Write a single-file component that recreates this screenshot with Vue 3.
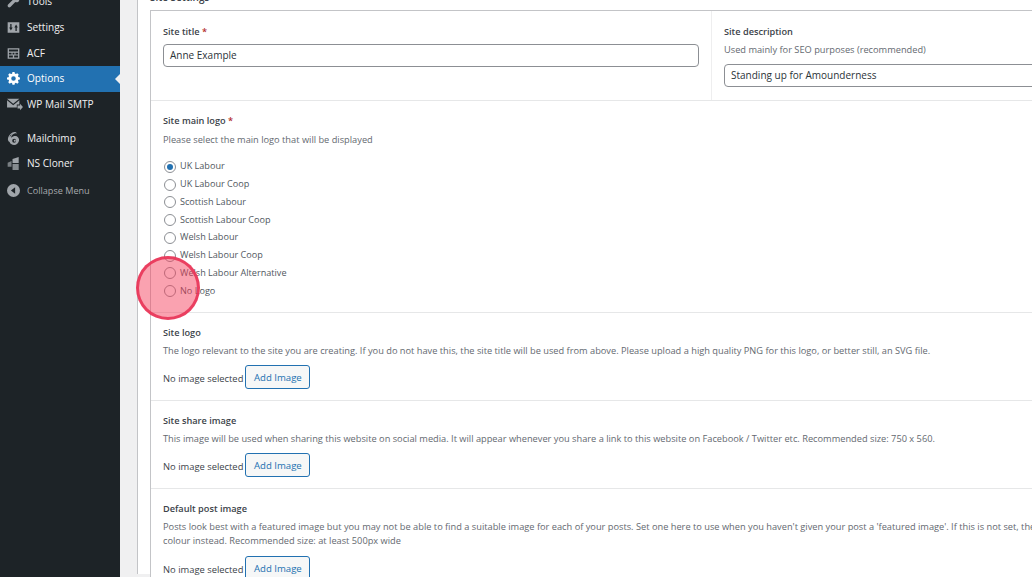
<script setup>
const logos = ['UK Labour', 'UK Labour Coop', 'Scottish Labour', 'Scottish Labour Coop', 'Welsh Labour', 'Welsh Labour Coop', 'Welsh Labour Alternative', 'No Logo']
const images = [
  { title: 'Site logo', desc: ['The logo relevant to the site you are creating. If you do not have this, the site title will be used from above. Please upload a high quality PNG for this logo, or better still, an SVG file.'] },
  { title: 'Site share image', desc: ['This image will be used when sharing this website on social media. It will appear whenever you share a link to this website on Facebook / Twitter etc. Recommended size: 750 x 560.'] },
  { title: 'Default post image', desc: ["Posts look best with a featured image but you may not be able to find a suitable image for each of your posts. Set one here to use when you haven't given your post a 'featured image'. If this is not set, the site will use a block of", 'colour instead. Recommended size: at least 500px wide'] }
]
</script>

<template>
  <div class="page">
    <aside class="side">
      <ul class="menu">
        <li class="item">
          <svg class="ic" viewBox="0 0 20 20"><path d="M18.500 3.600l-3.300 3.300-2.200-.6-.6-2.200 3.300-3.300C13.500.1 11 .8 9.700 2.500 8.700 3.900 8.600 5.700 9.200 7.200L1.700 14.700c-1 1-1 2.600 0 3.600s2.600 1 3.600 0l7.500-7.500c1.500.6 3.300.5 4.700-.5 1.700-1.300 2-4.300 1-6.700z"/></svg>
          <span>Tools</span>
        </li>
        <li class="item">
          <svg class="ic" viewBox="0 0 20 20"><path fill-rule="evenodd" d="M1 2h18v16H1zM5 4.500v5.500H3.300L6 14.500 8.700 10H7V4.500zM13 15.500V10h-1.700L14 5.500l2.700 4.500H15v5.500z"/></svg>
          <span>Settings</span>
        </li>
        <li class="item">
          <svg class="ic" viewBox="0 0 20 20"><path fill-rule="evenodd" d="M1 2h18v16H1zM3 4v3h14V4zM3 9v2.500h4V9zM8.500 9v2.500h3V9zM13 9v2.500h4V9zM3 13v3h6v-3zM11 13v3h6v-3z"/></svg>
          <span>ACF</span>
        </li>
        <li class="item active">
          <svg class="ic" viewBox="0 0 20 20"><path fill-rule="evenodd" d="M8.400 0h3.200l.5 2.400 1.600.7 2.100-1.300 2.300 2.300-1.300 2.100.7 1.600 2.400.5v3.200l-2.400.5-.7 1.600 1.300 2.100-2.300 2.300-2.100-1.300-1.600.7-.5 2.400H8.400l-.5-2.400-1.600-.7-2.100 1.300-2.300-2.300 1.300-2.100-.7-1.600L0 11.600V8.400l2.400-.5.7-1.600-1.300-2.100 2.300-2.300 2.100 1.300 1.600-.7zM10 6.500a3.500 3.500 0 1 0 0 7 3.500 3.500 0 0 0 0-7z"/></svg>
          <span>Options</span>
        </li>
        <li class="item">
          <svg class="ic wide" viewBox="0 0 22 18"><path d="M0 1h17L8.500 8zM0 3l8.500 7L17 3v6h-3.500v4H0z"/><path d="M14.500 10.500h3.500V8l4 4.500-4 4.500v-2.500h-3.500z"/></svg>
          <span>WP Mail SMTP</span>
        </li>
        <li class="item gap">
          <svg class="ic" viewBox="0 0 20 20"><path fill-rule="evenodd" d="M11.500 0c2 0 3.500 1 4 2.500-2-.8-3.800-.5-5.500.5C7.500 4.500 6 7 6.500 9c2.500-2.500 6-3.500 9-2 2 1 3.500 3.500 3 6.500-.5 3.500-4 6.500-7.500 6.500-3.500 0-6.500-2-7-4.500C2 14.500 1 12 1.500 10 2.500 5 7.500 0 11.500 0zM11 10.500a3 3 0 1 0 0 6 3 3 0 0 0 0-6zM9.500 1.800L5 5l-1 3 3-4zM12 12a1.500 1.500 0 1 1 0 3 1.500 1.500 0 0 1 0-3z"/></svg>
          <span>Mailchimp</span>
        </li>
        <li class="item">
          <svg class="ic" viewBox="0 0 20 20"><path opacity=".7" d="M1 9l6-3v9H1z"/><path d="M8.500 3L18 0v9.300H8.500z"/><path opacity=".8" d="M8.500 10.700H18V20H8.500z"/></svg>
          <span>NS Cloner</span>
        </li>
        <li class="item collapse">
          <svg class="ic" viewBox="0 0 20 20"><path fill-rule="evenodd" d="M10 0a10 10 0 1 1 0 20 10 10 0 0 1 0-20zM12.500 5L6 10l6.500 5z"/></svg>
          <span>Collapse Menu</span>
        </li>
      </ul>
    </aside>

    <main class="main">
      <div class="sheet">
        <div class="heading">Site Settings</div>
        <section class="card">
          <div class="row split">
            <div class="cell title-cell">
              <div class="label">Site title <em>*</em></div>
              <div class="input">Anne Example</div>
            </div>
            <div class="cell desc-cell">
              <div class="label">Site description</div>
              <div class="hint">Used mainly for SEO purposes (recommended)</div>
              <div class="input">Standing up for Amounderness</div>
            </div>
          </div>

          <div class="row logos">
            <div class="label">Site main logo <em>*</em></div>
            <div class="hint">Please select the main logo that will be displayed</div>
            <ul class="radios">
              <li v-for="(logo, i) in logos" :key="logo" class="radio-row">
                <span class="radio" :class="{ on: i === 0 }"></span>
                <span class="radio-text">{{ logo }}</span>
              </li>
            </ul>
          </div>

          <div v-for="img in images" :key="img.title" class="row image-row">
            <div class="label">{{ img.title }}</div>
            <div class="hint wrap">
              <div v-for="line in img.desc" :key="line">{{ line }}</div>
            </div>
            <div class="picker">
              <span class="none">No image selected</span>
              <button class="btn" type="button">Add Image</button>
            </div>
          </div>
        </section>
      </div>
    </main>
    <div class="spot"></div>
  </div>
</template>

<style>
html, body { margin: 0; overflow: hidden; background: #f0f0f1; }
</style>

<style scoped>
.page {
  position: relative;
  display: flex;
  width: 1032px;
  height: 577px;
  overflow: hidden;
  font-family: "Open Sans", "Noto Sans", sans-serif;
  font-size: 9.4px;
  color: #3c434a;
}
.side {
  flex: 0 0 120px;
  background: #1d2327;
  color: #f0f0f1;
  overflow: hidden;
}
.menu { list-style: none; margin: -11px 0 0; padding: 0; }
.item {
  display: flex;
  align-items: center;
  gap: 7px;
  height: 25.7px;
  padding-left: 7px;
  font-size: 10.1px;
}
.item span { margin-bottom: 1px; }
.item .ic { flex: none; width: 13px; height: 13px; fill: #a0a5aa; }
.item .ic.wide { width: 16px; height: 13px; margin-right: -3px; }
.item.gap { margin-top: 8px; }
.item.active {
  position: relative;
  background: #2271b1;
  color: #fff;
}
.item.active .ic { fill: #fff; }
.item.active::after {
  content: "";
  position: absolute;
  right: 0;
  top: 8px;
  border: 5px solid transparent;
  border-left: 0;
  border-right-color: #f0f0f1;
}
.item.collapse { color: #a7aaad; font-size: 9.1px; margin-top: 1px; }
.main {
  flex: 1;
  min-width: 0;
  padding-left: 17px;
}
.sheet {
  height: 100%;
  background: #fff;
  border-left: 1px solid #c3c4c7;
  padding-left: 12px;
  box-sizing: border-box;
}
.heading {
  height: 10px;
  line-height: 0;
  margin-top: -3px;
  padding-bottom: 3px;
  font-size: 10px;
  font-weight: 600;
  color: #3c434a;
}
.card {
  width: 1000px;
  border: 1px solid #c3c4c7;
  border-right: 0;
  background: #fff;
}
.row { border-bottom: 1px solid #e6e7e8; box-sizing: border-box; }
.split { display: flex; height: 90px; }
.cell { box-sizing: border-box; padding: 14px 12px 0; }
.title-cell { flex: 0 0 560px; }
.desc-cell { flex: 1; border-left: 1px solid #eeeeef; }
.label { font-size: 9.2px; font-weight: 600; color: #3c434a; line-height: 13px; }
.label em { font-style: normal; color: #b32d2e; }
.hint { font-size: 9.25px; color: #646970; line-height: 13px; margin-top: 6px; white-space: nowrap; }
.desc-cell .hint { margin-top: 5px; }
.input {
  box-sizing: border-box;
  width: 536px;
  height: 23px;
  margin-top: 6px;
  padding: 0 6px;
  border: 1px solid #8c8f94;
  border-radius: 4px;
  font-size: 10px;
  line-height: 21px;
  color: #2c3338;
}
.desc-cell .input { width: 500px; margin-top: 8px; }
.logos { height: 212px; padding: 13px 12px 0; }
.radios { list-style: none; margin: 12px 0 0; padding: 0; }
.radio-row { display: flex; align-items: center; gap: 4px; height: 17.75px; padding-left: 1px; color: #50575e; font-size: 9.1px; }
.radio-text { margin-bottom: 2px; }
.radio {
  box-sizing: border-box;
  width: 12px;
  height: 12px;
  border: 1px solid #8c8f94;
  border-radius: 50%;
  background: #fff;
  position: relative;
}
.radio.on::after {
  content: "";
  position: absolute;
  inset: 2px;
  border-radius: 50%;
  background: #2271b1;
}
.image-row { height: 88px; padding: 13px 12px 0; }
.image-row:last-child { height: auto; border-bottom: 0; }
.hint.wrap { margin-top: 5px; line-height: 14px; }
.picker { display: flex; align-items: center; gap: 2px; margin-top: 7px; }
.image-row:last-child .picker { margin-top: 8px; }
.none { margin-top: 2px; }
.btn {
  box-sizing: border-box;
  height: 24px;
  width: 65px;
  padding: 0;
  border: 1px solid #2271b1;
  border-radius: 3px;
  background: #f6f7f7;
  color: #2271b1;
  font: inherit;
  font-size: 9.6px;
}
.spot {
  position: absolute;
  left: 136px;
  top: 256px;
  width: 64px;
  height: 64px;
  box-sizing: border-box;
  border: 3px solid rgba(233, 53, 88, .9);
  border-radius: 50%;
  background: rgba(244, 60, 90, .48);
}
</style>
